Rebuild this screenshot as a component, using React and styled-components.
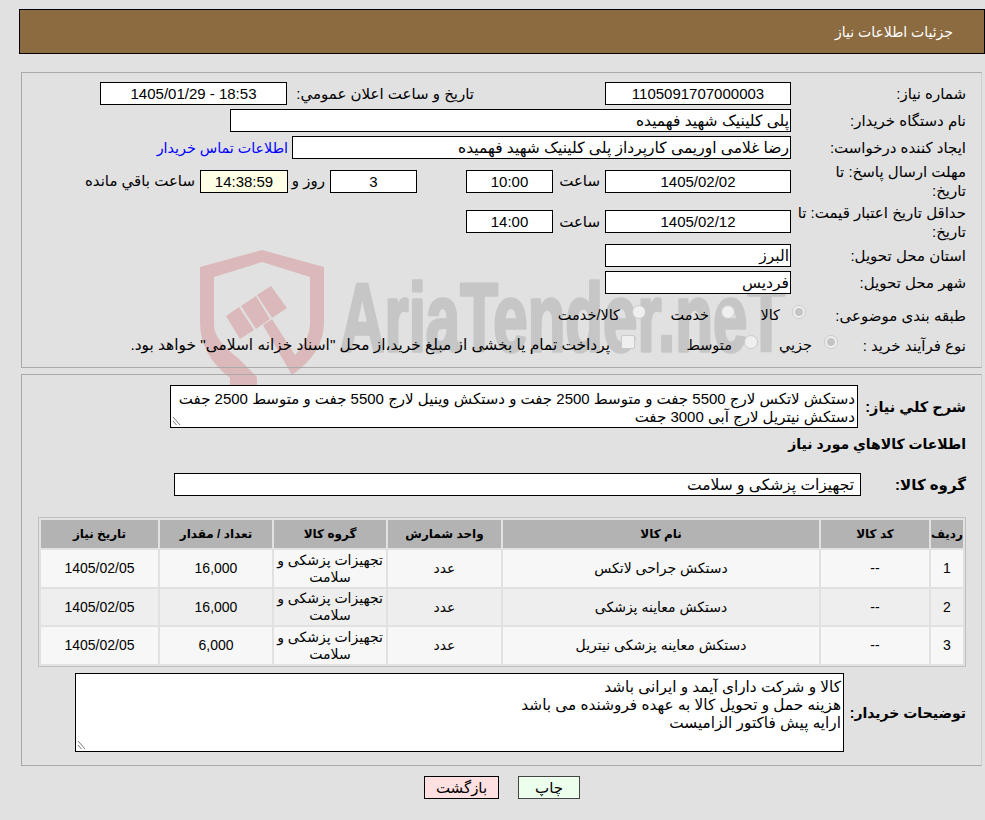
import React from 'react'
import styled, { createGlobalStyle } from 'styled-components'

const GlobalStyle = createGlobalStyle`
	html,
	body {
		margin: 0;
		padding: 0;
		background: #e1e1e1;
	}

	body {
		font-family: 'Liberation Sans', 'DejaVu Sans', sans-serif;
		font-size: 15px;
		color: #000;
	}
`

const items = [
	{ row: 1, name: 'دستکش جراحی لاتکس', qty: '16,000' },
	{ row: 2, name: 'دستکش معاینه پزشکی', qty: '16,000' },
	{ row: 3, name: 'دستکش معاینه پزشکی نیتریل', qty: '6,000' },
]

const Watermark = () => (
	<WatermarkSvg viewBox='0 0 610 150' aria-hidden='true'>
		<g fill='#dbb9ba'>
			<path d='M5 22 L67 5 L129 22 L129 77 Q129 108 97 130 L68 80 L77 74 L100 110 Q115 95 115 77 L115 32 L67 17 L19 32 L19 80 Q19 95 43 113 L62 132 L62 150 L35 150 L35 133 Q5 110 5 77 Z' />
			<path d='M31 71 L44 62 L59 85 L45 94 Z' />
			<path d='M46 61 L61 51 L75 74 L61 84 Z' />
			<path d='M62 50 L76 41 L92 63 L77 73 Z' />
		</g>
		<WatermarkText x='145' y='106' textLength='445' lengthAdjust='spacingAndGlyphs'>
			AriaTender.neT
		</WatermarkText>
	</WatermarkSvg>
)

const Grip = () => (
	<GripSvg viewBox='0 0 9 10' aria-hidden='true'>
		<path d='M1 1 L8 9 M1 5 L4.5 9' stroke='#777' strokeWidth='1' fill='none' />
	</GripSvg>
)

const App = () => {
	return (
		<Page dir='rtl'>
			<GlobalStyle />
			<Watermark />
			<Header>جزئیات اطلاعات نیاز</Header>

			<MainPanel>
				<Row>
					<Label>شماره نیاز:</Label>
					<ValueBox $w={186} $center>1105091707000003</ValueBox>
					<InlineLabel $w={318} $pr={131}>تاریخ و ساعت اعلان عمومي:</InlineLabel>
					<ValueBox $w={187} $center>18:53 - 1405/01/29</ValueBox>
				</Row>
				<Row>
					<Label>نام دستگاه خریدار:</Label>
					<ValueBox $w={561}>پلی کلینیک شهید فهمیده</ValueBox>
				</Row>
				<Row>
					<Label>ایجاد کننده درخواست:</Label>
					<ValueBox $w={499}>رضا غلامی اوریمی کارپرداز پلی کلینیک شهید فهمیده</ValueBox>
					<ContactLink href='#'>اطلاعات تماس خریدار</ContactLink>
				</Row>
				<TallRow $h={38}>
					<Label>مهلت ارسال پاسخ: تا<br />تاریخ:</Label>
					<ValueBox $w={186} $center>1405/02/02</ValueBox>
					<InlineLabel $w={52} $pr={5}>ساعت</InlineLabel>
					<ValueBox $w={87} $center>10:00</ValueBox>
					<ValueBox $w={87} $center $mr={49}>3</ValueBox>
					<InlineLabel $w={42} $pr={5}>روز و</InlineLabel>
					<ValueBox $w={88} $center $bg='#ffffe6'>14:38:59</ValueBox>
					<InlineLabel $w={120} $pr={5}>ساعت باقي مانده</InlineLabel>
				</TallRow>
				<TallRow $h={39}>
					<Label>حداقل تاریخ اعتبار قیمت: تا<br />تاریخ:</Label>
					<ValueBox $w={186} $center>1405/02/12</ValueBox>
					<InlineLabel $w={52} $pr={5}>ساعت</InlineLabel>
					<ValueBox $w={87} $center>14:00</ValueBox>
				</TallRow>
				<Row>
					<Label>استان محل تحویل:</Label>
					<ValueBox $w={186}>البرز</ValueBox>
				</Row>
				<Row>
					<Label>شهر محل تحویل:</Label>
					<ValueBox $w={186}>فردیس</ValueBox>
				</Row>
				<OptionRow $first>
					<Label $w={175}>طبقه بندی موضوعی:</Label>
					<Option $w={71}><Radio $on />کالا</Option>
					<Option $w={89}><Radio />خدمت</Option>
					<Option><Radio />کالا/خدمت</Option>
				</OptionRow>
				<OptionRow>
					<Label $w={143}>نوع فرآیند خرید :</Label>
					<Option $w={80}><Radio $on />جزيي</Option>
					<Option $w={123}><Radio />متوسط</Option>
					<Checkbox />
					<Note>پرداخت تمام یا بخشی از مبلغ خرید،از محل "اسناد خزانه اسلامی" خواهد بود.</Note>
				</OptionRow>
			</MainPanel>

			<DetailPanel>
				<SummaryRow>
					<BoldLabel $w={123} $size={14.5}>شرح کلي نیاز:</BoldLabel>
					<TextArea $w={688} $h={43} $size={15}>
						دستکش لاتکس لارج 5500 جفت و متوسط 2500 جفت و دستکش وینیل لارج 5500 جفت و متوسط 2500 جفت دستکش نیتریل لارج آبی 3000 جفت
						<Grip />
					</TextArea>
				</SummaryRow>
				<SectionTitle>اطلاعات کالاهاي مورد نیاز</SectionTitle>
				<GroupRow>
					<BoldLabel $w={120} $size={15}>گروه کالا:</BoldLabel>
					<ValueBox $w={687} $inset={6}>تجهیزات پزشکی و سلامت</ValueBox>
				</GroupRow>

				<TableFrame>
					<ItemsTable>
						<colgroup>
							<col width='32' />
							<col width='108' />
							<col width='316' />
							<col width='113' />
							<col width='112' />
							<col width='112' />
							<col width='117' />
						</colgroup>
						<thead>
							<tr>
								<th>ردیف</th>
								<th>کد کالا</th>
								<th>نام کالا</th>
								<th>واحد شمارش</th>
								<th>گروه کالا</th>
								<th>تعداد / مقدار</th>
								<th>تاریخ نیاز</th>
							</tr>
						</thead>
						<tbody>
							{items.map(item => (
								<tr key={item.row}>
									<td>{item.row}</td>
									<td>--</td>
									<td>{item.name}</td>
									<td>عدد</td>
									<GroupCell>تجهیزات پزشکی و سلامت</GroupCell>
									<td>{item.qty}</td>
									<td>1405/02/05</td>
								</tr>
							))}
						</tbody>
					</ItemsTable>
				</TableFrame>

				<NotesRow>
					<BoldLabel $w={137} $size={14}>توضیحات خریدار:</BoldLabel>
					<TextArea $w={769} $h={79} $size={15.3}>
						کالا و شرکت دارای آیمد و ایرانی باشد
						<br />
						هزینه حمل و تحویل کالا به عهده فروشنده می باشد
						<br />
						ارایه پیش فاکتور الزامیست
						<Grip />
					</TextArea>
				</NotesRow>
			</DetailPanel>

			<Actions>
				<ActionButton $w={62} $bg='#ecffec' $line='#444'>چاپ</ActionButton>
				<ActionButton $w={75} $bg='#ffe0e0' $line='#000'>بازگشت</ActionButton>
			</Actions>
		</Page>
	)
}

const Page = styled.div`
	position: relative;
	width: 985px;
	height: 820px;
	overflow: hidden;
	padding-top: 9px;
	box-sizing: border-box;
`

const WatermarkSvg = styled.svg`
	position: absolute;
	left: 195px;
	top: 245px;
	width: 610px;
	height: 150px;
	pointer-events: none;
`

const WatermarkText = styled.text`
	direction: ltr;
	font-family: 'Liberation Sans', sans-serif;
	font-weight: 700;
	font-size: 96px;
	fill: #c6c6c6;
	stroke: #c6c6c6;
	stroke-width: 3.5px;
	stroke-linejoin: round;
`

const GripSvg = styled.svg`
	position: absolute;
	left: 1px;
	bottom: 1px;
	width: 9px;
	height: 10px;
`

const Header = styled.div`
	position: relative;
	height: 45px;
	margin-left: 19px;
	padding-right: 31px;
	display: flex;
	align-items: center;
	background: #8b6b3f;
	border: 1px solid #000;
	box-sizing: border-box;
	color: #fff;
	font-size: 14px;
`

const Panel = styled.section`
	position: relative;
	margin-left: 21px;
	margin-right: 3px;
	border: 1px solid #a9a9a9;
	border-right-color: #cfcfcf;
	box-sizing: border-box;
`

const MainPanel = styled(Panel)`
	height: 296px;
	margin-top: 18px;
	padding-top: 9px;
`

const DetailPanel = styled(Panel)`
	height: 392px;
	margin-top: 6px;
`

const Row = styled.div`
	display: flex;
	align-items: center;
	height: 23px;
	margin-bottom: 4px;
`

const TallRow = styled(Row)`
	height: ${p => p.$h}px;
	margin-top: -1px;
	margin-bottom: 3px;
`

const OptionRow = styled(Row)`
	height: 30px;
	margin: ${p => (p.$first ? '6px 0 0' : '0')};
`

const Label = styled.div`
	width: ${p => p.$w || 190}px;
	flex: none;
	padding-right: 15px;
	box-sizing: border-box;
	line-height: 19px;
	white-space: nowrap;
`

const ValueBox = styled.div`
	width: ${p => p.$w}px;
	height: 23px;
	flex: none;
	padding: 0 ${p => p.$inset || 1}px 0 1px;
	margin-right: ${p => p.$mr || 0}px;
	display: flex;
	align-items: center;
	justify-content: ${p => (p.$center ? 'center' : 'flex-start')};
	background: ${p => p.$bg || '#fff'};
	border: 1px solid #000;
	box-sizing: border-box;
	font-size: ${p => (p.$center ? 15 : 15.5)}px;
	white-space: nowrap;
`

const InlineLabel = styled.span`
	width: ${p => p.$w}px;
	flex: none;
	padding-right: ${p => p.$pr}px;
	box-sizing: border-box;
	white-space: nowrap;
`

const ContactLink = styled.a`
	margin-right: 4px;
	font-size: 14.3px;
	color: #00f;
	text-decoration: none;
	white-space: nowrap;
`

const Option = styled.label`
	width: ${p => (p.$w ? `${p.$w}px` : 'auto')};
	flex: none;
	display: flex;
	align-items: center;
	gap: 12px;
	font-size: 14.5px;
	white-space: nowrap;
`

const Radio = styled.span`
	width: 14px;
	height: 14px;
	flex: none;
	margin-bottom: 7px;
	border: 1px solid #cacaca;
	border-radius: 50%;
	background: ${p => (p.$on ? 'radial-gradient(circle, #c4c4c4 0 3.5px, #efefef 4.5px)' : '#efefef')};
	box-sizing: border-box;
`

const Checkbox = styled.span`
	width: 14px;
	height: 14px;
	flex: none;
	margin-bottom: 7px;
	border: 1px solid #cacaca;
	border-radius: 2px;
	background: #efefef;
	box-sizing: border-box;
`

const Note = styled.span`
	margin-right: 11px;
	font-size: 15.4px;
	white-space: nowrap;
`

const BoldLabel = styled.div`
	width: ${p => p.$w}px;
	flex: none;
	padding-right: 15px;
	box-sizing: border-box;
	font-size: ${p => p.$size}px;
	font-weight: 700;
	white-space: nowrap;
`

const SummaryRow = styled.div`
	display: flex;
	align-items: center;
	padding-top: 10px;
`

const TextArea = styled.div`
	position: relative;
	width: ${p => p.$w}px;
	height: ${p => p.$h}px;
	flex: none;
	padding: 4px 2px 0;
	background: #fff;
	border: 1px solid #000;
	box-sizing: border-box;
	font-size: ${p => p.$size}px;
	line-height: 18px;
`

const SectionTitle = styled.h3`
	height: 38px;
	margin: 7px 15px 0 0;
	font-size: 14px;
	font-weight: 700;
	line-height: 18px;
`

const GroupRow = styled.div`
	display: flex;
	align-items: center;
`

const TableFrame = styled.div`
	margin: 21px 15px 0 16px;
	border: 1px solid #c0c0c0;
`

const ItemsTable = styled.table`
	width: 926px;
	table-layout: fixed;
	border-collapse: separate;
	border-spacing: 2px;
	font-size: 14px;

	th {
		height: 28px;
		padding: 0;
		background: #b3b3b3;
		font-size: 12px;
		font-weight: 700;
		text-align: center;
	}

	td {
		height: 37px;
		padding: 0;
		background: #f7f7f7;
		text-align: center;
		line-height: 17px;
	}

	tbody tr:nth-child(even) td {
		height: 36px;
		background: #eee;
	}
`

const GroupCell = styled.td`
	padding: 0 4px;
`

const NotesRow = styled.div`
	display: flex;
	align-items: center;
	margin-top: 6px;
`

const Actions = styled.div`
	position: relative;
	display: flex;
	justify-content: center;
	gap: 19px;
	margin-top: 10px;
	padding-left: 19px;
`

const ActionButton = styled.button`
	width: ${p => p.$w}px;
	height: 23px;
	padding: 0;
	background: ${p => p.$bg};
	border: 1px solid ${p => p.$line};
	font-family: inherit;
	font-size: 15px;
	color: #000;
`

export default App
